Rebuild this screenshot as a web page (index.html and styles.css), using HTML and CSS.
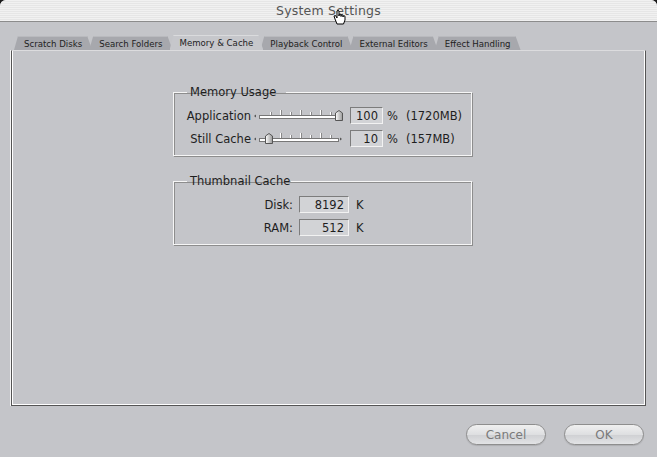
FILE: index.html
```html
<!DOCTYPE html>
<html>
<head>
<meta charset="utf-8">
<link rel="stylesheet" href="styles.css">
</head>
<body>
<div class="window">
  <div class="titlebar">
    <span class="title">System Settings</span>
    <svg class="cursor" width="14" height="16" viewBox="0 0 14 16">
      <path d="M4 15 L2 10 L1 7 L2.5 6.5 L4 9 L4 2 Q5 0.8 6 2 L6 7 L6 5.5 Q7 4.5 8 5.5 L8 7.5 L8 6.3 Q9 5.3 10 6.3 L10 8 L10 7.2 Q11 6.3 12 7.2 L12 11 L10.5 15 Z" fill="#fff" stroke="#000" stroke-width="1"/>
    </svg>
  </div>
  <div class="tabs">
    <div class="tab">Scratch Disks</div>
    <div class="tab">Search Folders</div>
    <div class="tab active">Memory &amp; Cache</div>
    <div class="tab">Playback Control</div>
    <div class="tab">External Editors</div>
    <div class="tab">Effect Handling</div>
  </div>
  <div class="panel">
    <fieldset class="group">
      <legend class="wide">Memory Usage</legend>
      <div class="mem-grid">
        <span class="lbl">Application</span>
        <svg class="slider" width="92" height="14" viewBox="0 0 92 14">
          <path d="M1 7 L3 5.5 L3 8.5 Z" fill="#555"/>
          <path d="M89 7 L87 5.5 L87 8.5 Z" fill="#555"/>
          <rect x="6.5" y="6.5" width="79" height="3" fill="#fff" stroke="#777" stroke-width="1"/>
          <g stroke="#fff" stroke-width="1">
            <line x1="17.5" y1="3" x2="17.5" y2="6"/><line x1="27.5" y1="1" x2="27.5" y2="6"/>
            <line x1="37.5" y1="3" x2="37.5" y2="6"/><line x1="47.5" y1="1" x2="47.5" y2="6"/>
            <line x1="57.5" y1="3" x2="57.5" y2="6"/><line x1="67.5" y1="1" x2="67.5" y2="6"/>
            <line x1="77.5" y1="3" x2="77.5" y2="6"/>
          </g>
          <g stroke="#888" stroke-width="1">
            <line x1="18.5" y1="3" x2="18.5" y2="6"/><line x1="28.5" y1="1" x2="28.5" y2="6"/>
            <line x1="38.5" y1="3" x2="38.5" y2="6"/><line x1="48.5" y1="1" x2="48.5" y2="6"/>
            <line x1="58.5" y1="3" x2="58.5" y2="6"/><line x1="68.5" y1="1" x2="68.5" y2="6"/>
            <line x1="78.5" y1="3" x2="78.5" y2="6"/>
          </g>
          <defs><linearGradient id="th" x1="0" x2="1"><stop offset="0" stop-color="#fff"/><stop offset="1" stop-color="#999"/></linearGradient></defs>
          <path d="M82.5 4 L86 1.5 L89.5 4 L89.5 11.5 L82.5 11.5 Z" fill="url(#th)" stroke="#555"/>
        </svg>
        <span class="field">100</span>
        <span class="unit">%</span>
        <span class="info">(1720MB)</span>

        <span class="lbl">Still Cache</span>
        <svg class="slider" width="92" height="14" viewBox="0 0 92 14">
          <path d="M1 7 L3 5.5 L3 8.5 Z" fill="#555"/>
          <path d="M89 7 L87 5.5 L87 8.5 Z" fill="#555"/>
          <rect x="6.5" y="6.5" width="79" height="3" fill="#fff" stroke="#777" stroke-width="1"/>
          <g stroke="#fff" stroke-width="1">
            <line x1="17.5" y1="3" x2="17.5" y2="6"/><line x1="27.5" y1="1" x2="27.5" y2="6"/>
            <line x1="37.5" y1="3" x2="37.5" y2="6"/><line x1="47.5" y1="1" x2="47.5" y2="6"/>
            <line x1="57.5" y1="3" x2="57.5" y2="6"/><line x1="67.5" y1="1" x2="67.5" y2="6"/>
            <line x1="77.5" y1="3" x2="77.5" y2="6"/>
          </g>
          <g stroke="#888" stroke-width="1">
            <line x1="18.5" y1="3" x2="18.5" y2="6"/><line x1="28.5" y1="1" x2="28.5" y2="6"/>
            <line x1="38.5" y1="3" x2="38.5" y2="6"/><line x1="48.5" y1="1" x2="48.5" y2="6"/>
            <line x1="58.5" y1="3" x2="58.5" y2="6"/><line x1="68.5" y1="1" x2="68.5" y2="6"/>
            <line x1="78.5" y1="3" x2="78.5" y2="6"/>
          </g>
          <path d="M12.5 4 L16 1.5 L19.5 4 L19.5 11.5 L12.5 11.5 Z" fill="url(#th)" stroke="#555"/>
        </svg>
        <span class="field">10</span>
        <span class="unit">%</span>
        <span class="info">(157MB)</span>
      </div>
    </fieldset>

    <fieldset class="group thumb">
      <legend>Thumbnail Cache</legend>
      <div class="thumb-grid">
        <span class="lbl">Disk:</span>
        <span class="field">8192</span>
        <span class="unit">K</span>
        <span class="lbl">RAM:</span>
        <span class="field">512</span>
        <span class="unit">K</span>
      </div>
    </fieldset>
  </div>
  <div class="buttons">
    <button class="btn">Cancel</button>
    <button class="btn">OK</button>
  </div>
</div>
</body>
</html>
```

FILE: styles.css
```css
html, body {
  margin: 0;
  padding: 0;
  background: #1a1a1a;
}
body {
  width: 657px;
  height: 457px;
  overflow: hidden;
  font-family: "DejaVu Sans", "Liberation Sans", sans-serif;
  color: #1e1e1e;
}
.window {
  width: 657px;
  height: 457px;
  background: #c4c5c9;
  border-radius: 6px 6px 0 0;
  overflow: hidden;
}
.titlebar {
  height: 21px;
  border-bottom: 1px solid #8c8c8c;
  background: repeating-linear-gradient(#f1f1f1 0 1px, #e6e6e6 1px 2px);
  display: flex;
  justify-content: center;
  align-items: center;
  position: relative;
}
.title {
  font-size: 12.5px;
  color: #555;
  letter-spacing: 0.2px;
}
.cursor {
  position: absolute;
  left: 333px;
  top: 9px;
}
.tabs {
  display: flex;
  padding-left: 14px;
  margin-top: 13px;
  height: 15px;
  align-items: flex-end;
}
.tab {
  font-size: 8.6px;
  height: 14px;
  line-height: 14px;
  padding: 0 10px 0 10px;
  margin-right: -3px;
  background: #a7a8ad;
  color: #222;
  clip-path: polygon(4px 0, calc(100% - 5px) 0, 100% 100%, 0 100%);
  border-top: 1px solid #b9babe;
  box-sizing: border-box;
  white-space: nowrap;
}
.tab.active {
  background: #c6c7cb;
  height: 15px;
  line-height: 15px;
  position: relative;
  z-index: 1;
  border-top: 1px solid #dadbdd;
}
.panel {
  margin-left: 11px;
  width: 635px;
  height: 356px;
  box-sizing: border-box;
  border-top: 1px solid #dcdcde;
  border-left: 1px solid #555;
  border-right: 1px solid #555;
  border-bottom: 1px solid #555;
  box-shadow: inset 1px 0 0 #fff, inset -1px 0 0 #fff, inset 0 -1px 0 #fff, -1px 0 0 #f4f4f4;
  padding-top: 34px;
  padding-left: 161px;
}
.group {
  width: 299px;
  box-sizing: border-box;
  margin: 0;
  padding: 8px 0 8px 0;
  border: 1px solid #f6f6f6;
  box-shadow: inset 1px 1px 0 #8d8d8d, 1px 1px 0 #8d8d8d;
  min-width: 0;
}
.group legend {
  font-size: 11.5px;
  padding: 0 1px 0 3px;
  margin-left: 13px;
  line-height: 14px;
}
.group legend.wide {
  padding-right: 10px;
}
.group.thumb {
  margin-top: 18px;
  padding-top: 8px;
  padding-bottom: 8px;
}
.mem-grid {
  display: grid;
  grid-template-columns: 79px 97px 33px 23px auto;
  row-gap: 6px;
  align-items: center;
  font-size: 11.5px;
}
.mem-grid .lbl {
  padding-right: 2px;
}
.lbl {
  text-align: right;
}
.unit {
  padding-left: 4px;
}
.field {
  height: 17px;
  line-height: 17px;
  box-sizing: border-box;
  background: #d2d3d6;
  border: 1px solid;
  border-color: #7c7c7c #f2f2f2 #f2f2f2 #7c7c7c;
  text-align: right;
  padding-right: 4px;
  font-size: 11.5px;
}
.thumb-grid {
  display: grid;
  grid-template-columns: 119px 50px auto;
  column-gap: 6px;
  row-gap: 6px;
  align-items: center;
  font-size: 11.5px;
}
.thumb-grid .unit {
  padding-left: 1px;
}
.buttons {
  display: flex;
  justify-content: flex-end;
  gap: 18px;
  padding-right: 13px;
  margin-top: 18px;
}
.btn {
  width: 80px;
  height: 21px;
  border-radius: 11px;
  border: 1px solid #8e8e8e;
  background: linear-gradient(#f0f0f0, #dedfe1 50%, #d0d1d4 55%, #e2e3e5);
  color: #7a7a7a;
  font-family: "DejaVu Sans", "Liberation Sans", sans-serif;
  font-size: 12px;
  padding: 0;
  box-shadow: 0 1px 1px rgba(0,0,0,0.12);
}
```
